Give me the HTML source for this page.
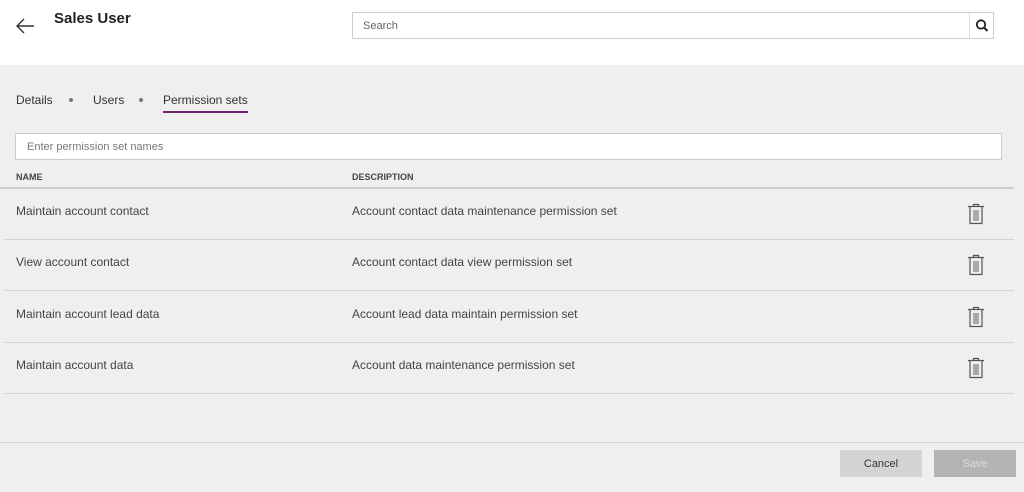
<!DOCTYPE html>
<html><head><style>
*{box-sizing:border-box;margin:0;padding:0}
body{width:1024px;height:492px;background:#efefef;font-family:"Liberation Sans",sans-serif;position:relative;overflow:hidden;color:#333}
.top{position:absolute;left:0;top:0;width:1024px;height:65px;background:#fff}
.abs{position:absolute}
.title{left:54px;top:10px;font-size:15px;font-weight:bold;color:#222}
.search{left:352px;top:12px;width:642px;height:27px;border:1px solid #ccc;background:#fff;font-size:11px;color:#666;padding:7px 10px}
.sbtn{position:absolute;right:0;top:0;width:24px;height:25px;border-left:1px solid #ddd}
.tab{top:93px;font-size:12px;color:#333}
.dot{top:98px;width:4px;height:4px;border-radius:50%;background:#777}
.inp{left:15px;top:133px;width:987px;height:27px;border:1px solid #ccc;background:#fff;font-size:11px;color:#777;padding:7px 11px}
.hd{top:172px;font-size:9px;font-weight:bold;color:#444}
.cell{font-size:12px;color:#444}
.line{height:1px;background:#d4d4d4}
.btn{top:450px;height:27px;font-size:11px;text-align:center;line-height:29px}
</style></head><body>
<div class="top"></div>
<svg class="abs" style="left:15px;top:17px" width="21" height="18" viewBox="0 0 21 18"><path d="M19 9H2M9 2L2 9l7 7" fill="none" stroke="#333" stroke-width="1.4"/></svg>
<div class="abs title">Sales User</div>
<div class="abs search">Search<div class="sbtn"><svg width="24" height="25" viewBox="0 0 24 25"><circle cx="11" cy="11.5" r="4.2" fill="none" stroke="#222" stroke-width="1.8"/><path d="M14 14.5l3.5 3.5" stroke="#222" stroke-width="2"/></svg></div></div>
<div class="abs tab" style="left:16px">Details</div>
<div class="abs dot" style="left:69px"></div>
<div class="abs tab" style="left:93px">Users</div>
<div class="abs dot" style="left:139px"></div>
<div class="abs tab" style="left:163px">Permission sets</div>
<div class="abs" style="left:163px;top:111px;width:85px;height:2px;background:#742774"></div>
<div class="abs inp">Enter permission set names</div>
<div class="abs hd" style="left:16px">NAME</div>
<div class="abs hd" style="left:352px">DESCRIPTION</div>
<div class="abs line" style="left:0;top:187px;width:1014px;height:2px;background:#ccc"></div>

<div class="abs cell" style="left:16px;top:204px">Maintain account contact</div>
<div class="abs cell" style="left:352px;top:204px">Account contact data maintenance permission set</div>
<div class="abs line" style="left:4px;top:239px;width:1010px"></div>
<div class="abs cell" style="left:16px;top:255px">View account contact</div>
<div class="abs cell" style="left:352px;top:255px">Account contact data view permission set</div>
<div class="abs line" style="left:4px;top:290px;width:1010px"></div>
<div class="abs cell" style="left:16px;top:307px">Maintain account lead data</div>
<div class="abs cell" style="left:352px;top:307px">Account lead data maintain permission set</div>
<div class="abs line" style="left:4px;top:342px;width:1010px"></div>
<div class="abs cell" style="left:16px;top:358px">Maintain account data</div>
<div class="abs cell" style="left:352px;top:358px">Account data maintenance permission set</div>
<div class="abs line" style="left:4px;top:393px;width:1010px"></div>

<svg class="abs" style="left:966px;top:203px" width="20" height="22" viewBox="0 0 20 22"><g fill="none" stroke="#555" stroke-width="1.2"><path d="M2 3.5h16M7.5 3.5V1.5h5v2M4 3.5v17h12v-17"/><path d="M8 7v11M10 7v11M12 7v11" stroke-width="0.9"/></g></svg>
<svg class="abs" style="left:966px;top:254px" width="20" height="22" viewBox="0 0 20 22"><g fill="none" stroke="#555" stroke-width="1.2"><path d="M2 3.5h16M7.5 3.5V1.5h5v2M4 3.5v17h12v-17"/><path d="M8 7v11M10 7v11M12 7v11" stroke-width="0.9"/></g></svg>
<svg class="abs" style="left:966px;top:306px" width="20" height="22" viewBox="0 0 20 22"><g fill="none" stroke="#555" stroke-width="1.2"><path d="M2 3.5h16M7.5 3.5V1.5h5v2M4 3.5v17h12v-17"/><path d="M8 7v11M10 7v11M12 7v11" stroke-width="0.9"/></g></svg>
<svg class="abs" style="left:966px;top:357px" width="20" height="22" viewBox="0 0 20 22"><g fill="none" stroke="#555" stroke-width="1.2"><path d="M2 3.5h16M7.5 3.5V1.5h5v2M4 3.5v17h12v-17"/><path d="M8 7v11M10 7v11M12 7v11" stroke-width="0.9"/></g></svg>

<div class="abs line" style="left:0;top:442px;width:1024px"></div>
<div class="abs btn" style="left:840px;width:82px;background:#d4d4d4;color:#333">Cancel</div>
<div class="abs btn" style="left:934px;width:82px;background:#b4b4b4;color:#ddd">Save</div>
</body></html>
